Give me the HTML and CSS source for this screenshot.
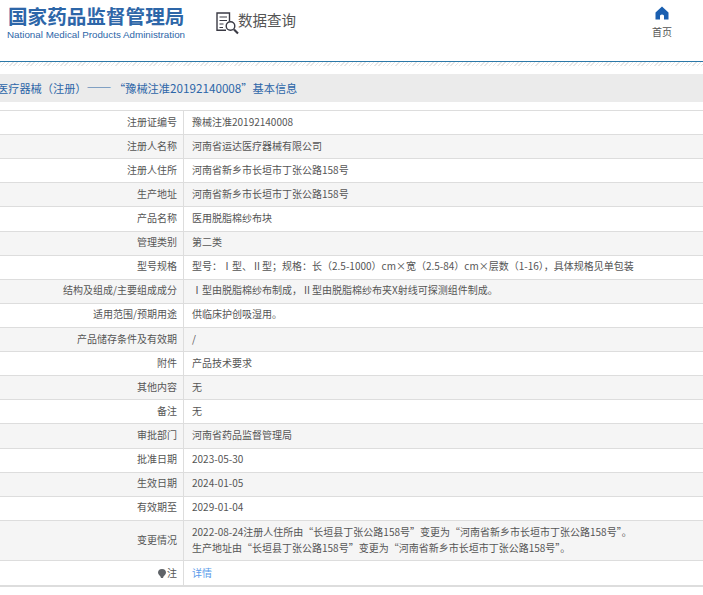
FILE: index.html
```html
<!DOCTYPE html>
<html lang="zh-CN">
<head>
    <meta charset="UTF-8">
    <title>数据查询</title>
    <link rel="stylesheet" href="styles.css">
</head>
<body>
    <header class="top-bar">
        <div class="logo">
            <div class="logo-cn">国家药品监督管理局</div>
            <div class="logo-en">National Medical Products Administration</div>
        </div>
        <div class="search-title">
            <svg class="search-icon" width="23" height="23" viewBox="0 0 23 23" fill="none" stroke="#3a3a44" stroke-width="1.4">
                <path d="M10 18.3H1V1h12.5v8"/>
                <path d="M3.5 5h7.5M3.5 8.5h7.5M3.5 12h4M3.5 15.5h3.5" stroke-width="1.2"/>
                <circle cx="14.5" cy="14" r="4.3"/>
                <path d="M18 17.5l4 4" stroke-width="2.2"/>
            </svg>
            <span>数据查询</span>
        </div>
        <div class="home-link">
            <svg width="14" height="14" viewBox="0 0 14 14"><path fill="#1a5fb0" d="M7 0.5L0.5 6.5V13.5H5V9.5Q7 7.5 9 9.5V13.5H13.5V6.5Z"/></svg>
            <span>首页</span>
        </div>
    </header>
    <div class="header-line"></div>

    <h2 class="page-title">医疗器械（注册）<span class="title-dash">——</span> “豫械注准<span class="title-num">20192140008</span>”基本信息</h2>

    <table class="info-table">
        <tr><td class="label">注册证编号</td><td>豫械注准20192140008</td></tr>
        <tr><td class="label">注册人名称</td><td>河南省运达医疗器械有限公司</td></tr>
        <tr><td class="label">注册人住所</td><td>河南省新乡市长垣市丁张公路158号</td></tr>
        <tr><td class="label">生产地址</td><td>河南省新乡市长垣市丁张公路158号</td></tr>
        <tr><td class="label">产品名称</td><td>医用脱脂棉纱布块</td></tr>
        <tr><td class="label">管理类别</td><td>第二类</td></tr>
        <tr><td class="label">型号规格</td><td>型号：Ⅰ型、Ⅱ型；规格：长（2.5-1000）cm×宽（2.5-84）cm×层数（1-16），具体规格见单包装</td></tr>
        <tr><td class="label">结构及组成/主要组成成分</td><td>Ⅰ型由脱脂棉纱布制成，Ⅱ型由脱脂棉纱布夹X射线可探测组件制成。</td></tr>
        <tr><td class="label">适用范围/预期用途</td><td>供临床护创吸湿用。</td></tr>
        <tr><td class="label">产品储存条件及有效期</td><td>/</td></tr>
        <tr><td class="label">附件</td><td>产品技术要求</td></tr>
        <tr><td class="label">其他内容</td><td>无</td></tr>
        <tr><td class="label">备注</td><td>无</td></tr>
        <tr><td class="label">审批部门</td><td>河南省药品监督管理局</td></tr>
        <tr><td class="label">批准日期</td><td>2023-05-30</td></tr>
        <tr><td class="label">生效日期</td><td>2024-01-05</td></tr>
        <tr><td class="label">有效期至</td><td>2029-01-04</td></tr>
        <tr class="change-row">
            <td class="label">变更情况</td>
            <td>2022-08-24注册人住所由“长垣县丁张公路158号”变更为“河南省新乡市长垣市丁张公路158号”。<br>生产地址由“长垣县丁张公路158号”变更为“河南省新乡市长垣市丁张公路158号”。</td>
        </tr>
        <tr class="note-row">
            <td class="label">
                <svg class="pin" width="8" height="9" viewBox="0 0 8 9"><path fill="#5f6368" d="M4 0a4 3.8 0 0 1 4 3.8C8 5.8 5.5 6.5 5 9H3C2.5 6.5 0 5.8 0 3.8A4 3.8 0 0 1 4 0Z"/></svg>注
            </td>
            <td><a class="detail-link" href="#">详情</a></td>
        </tr>
    </table>
</body>
</html>
```

FILE: styles.css
```css
html, body {
    overflow: hidden;
}

body {
    margin: 0;
    width: 703px;
    height: 595px;
    background-color: #fff;
    font-family: "Noto Sans CJK SC", "Liberation Sans", sans-serif;
    color: #555;
    font-size: 10px;
}

.top-bar {
    display: flex;
    height: 61px;
    box-sizing: border-box;
    padding: 4px 0 0 8px;
}

.logo {
    width: 208px;
}

.logo-cn {
    height: 24px;
    font-size: 19.6px;
    line-height: 24px;
    font-weight: bold;
    color: #2d66a8;
}

.logo-en {
    margin-left: -1px;
    font-family: "Liberation Sans", sans-serif;
    font-size: 9.8px;
    line-height: 13px;
    color: #2d66a8;
    white-space: nowrap;
}

.search-title {
    display: flex;
    align-items: flex-start;
    font-size: 14.5px;
    line-height: 22px;
    color: #555;
    padding-top: 5px;
}

.search-icon {
    margin-top: 3px;
    margin-right: -1px;
}

.home-link {
    margin-left: auto;
    margin-right: 30px;
    width: 22px;
    display: flex;
    flex-direction: column;
    align-items: center;
    line-height: 14px;
    padding-top: 2px;
    gap: 5px;
}

.header-line {
    height: 4px;
    border-top: 1px solid #2b78a8;
    background: repeating-linear-gradient(135deg, #e6e6e6 0, #e6e6e6 1px, #fff 1px, #fff 3px);
}

.page-title {
    margin: 8px 0 8px -3px;
    height: 28px;
    background-color: #ebebeb;
    color: #2d66a8;
    font-size: 11.2px;
    font-weight: normal;
    line-height: 28px;
    white-space: nowrap;
}

.title-dash {
    font-size: 12.5px;
}

.title-num {
    font-size: 11.7px;
}

.info-table {
    width: 703px;
    border-collapse: collapse;
    border-bottom: 2px solid #ddd;
}

.info-table td {
    height: 21.12px;
    padding: 0 0 2px 8px;
    border-top: 1px solid #ddd;
    font-size: 10px;
    line-height: 16px;
}

.info-table tr:nth-child(even) td {
    background-color: #f5f5f5;
}

.info-table .label {
    width: 177px;
    padding: 0 6px 2px 0;
    text-align: right;
    border-right: 1px solid #ddd;
}

.info-table .change-row td {
    height: 39px;
    padding-bottom: 0;
    line-height: 16.5px;
}

.info-table .note-row td {
    height: 24px;
    padding-bottom: 0;
}

.pin {
    margin-right: 1px;
    vertical-align: -1px;
}

.detail-link {
    color: #5b9bea;
    text-decoration: none;
}
```
